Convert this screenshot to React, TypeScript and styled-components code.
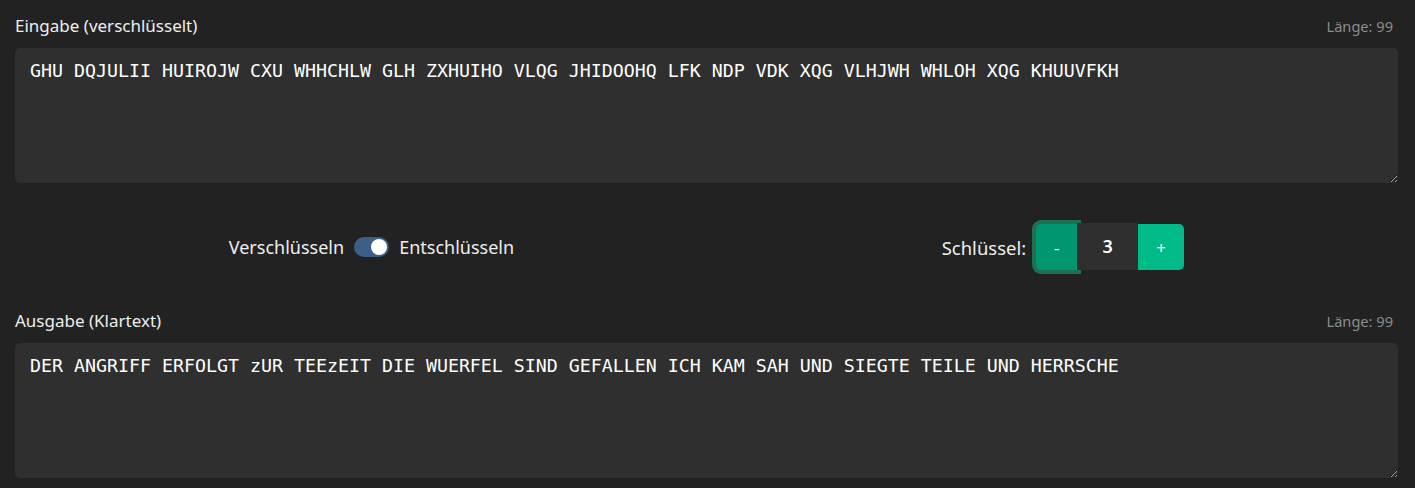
import React, { useState } from 'react';
import styled, { createGlobalStyle } from 'styled-components';

const GlobalStyle = createGlobalStyle`
  html, body {
    margin: 0;
    padding: 0;
    background: #222222;
  }
  body {
    font-family: "Noto Sans", "Open Sans", sans-serif;
    color: #eeeeee;
  }
`;

const Page = styled.div`
  display: flex;
  flex-direction: column;
  padding: 14px 17px 10px 15px;
  height: 488px;
  box-sizing: border-box;
`;

const Section = styled.section`
  display: flex;
  flex-direction: column;
  gap: 11px;
`;

const SectionHeader = styled.div`
  display: flex;
  justify-content: space-between;
  align-items: baseline;
  height: 23px;
`;

const Label = styled.label`
  font-size: 17px;
  line-height: 23px;
  color: #eeeeee;
`;

const Length = styled.span`
  font-size: 14.6px;
  color: #8c8c8c;
  padding-right: 5px;
`;

const TextArea = styled.textarea`
  display: block;
  box-sizing: border-box;
  width: 100%;
  height: 135px;
  margin: 0;
  padding: 12px 15px;
  border: none;
  border-radius: 5px;
  background: #2f2f2f;
  color: #ffffff;
  color-scheme: dark;
  font-family: "DejaVu Sans Mono", "Liberation Mono", monospace;
  font-size: 18.27px;
  line-height: 1.164;
  outline: none;
`;

const Controls = styled.div`
  display: flex;
  justify-content: space-around;
  align-items: center;
  height: 46px;
  margin: 41px 0 39px;
`;

const ToggleGroup = styled.div`
  display: flex;
  align-items: center;
  gap: 10px;
  font-size: 18px;
`;

const Switch = styled.button<{ $on: boolean }>`
  position: relative;
  width: 35px;
  height: 20px;
  padding: 0;
  border: none;
  border-radius: 10px;
  background: #3b5f86;
  cursor: pointer;
  &::after {
    content: "";
    position: absolute;
    top: 2px;
    left: ${p => (p.$on ? '17px' : '2px')};
    width: 16px;
    height: 16px;
    border-radius: 50%;
    background: #ffffff;
  }
`;

const KeyGroup = styled.div`
  display: flex;
  align-items: center;
  gap: 6px;
  font-size: 18.5px;
`;

const Stepper = styled.div`
  display: flex;
  align-items: stretch;
  height: 46px;
  padding-left: 4px;
`;

const StepButton = styled.button<{ $side: 'left' | 'right'; $focused?: boolean }>`
  width: ${p => (p.$side === 'left' ? '41px' : '46px')};
  border: none;
  margin: 0;
  padding: 0;
  color: #ffffff;
  font-family: inherit;
  font-size: 17px;
  cursor: pointer;
  background: ${p => (p.$side === 'left' ? '#009670' : '#00bb88')};
  border-radius: ${p => (p.$side === 'left' ? '5px 0 0 5px' : '0 5px 5px 0')};
  box-shadow: ${p => (p.$focused ? '0 0 0 4px #1f6e55' : 'none')};
  position: relative;
`;

const Value = styled.div`
  display: flex;
  align-items: center;
  justify-content: center;
  width: 61px;
  background: #2f2f2f;
  font-size: 18px;
  font-weight: 600;
  color: #ffffff;
  position: relative;
  z-index: 1;
  margin-top: -1px;
  padding-bottom: 1px;
`;

const cipher = 'GHU DQJULII HUIROJW CXU WHHCHLW GLH ZXHUIHO VLQG JHIDOOHQ LFK NDP VDK XQG VLHJWH WHLOH XQG KHUUVFKH';
const plain = 'DER ANGRIFF ERFOLGT zUR TEEzEIT DIE WUERFEL SIND GEFALLEN ICH KAM SAH UND SIEGTE TEILE UND HERRSCHE';

export default function App() {
  const [input, setInput] = useState(cipher);
  const [decrypt, setDecrypt] = useState(true);
  const [key, setKey] = useState(3);

  return (
    <>
      <GlobalStyle />
      <Page>
        <Section>
          <SectionHeader>
            <Label>Eingabe (verschlüsselt)</Label>
            <Length>Länge: {input.length}</Length>
          </SectionHeader>
          <TextArea value={input} onChange={e => setInput(e.target.value)} spellCheck={false} />
        </Section>

        <Controls>
          <ToggleGroup>
            <span>Verschlüsseln</span>
            <Switch $on={decrypt} onClick={() => setDecrypt(!decrypt)} aria-label="Modus" />
            <span>Entschlüsseln</span>
          </ToggleGroup>
          <KeyGroup>
            <span>Schlüssel:</span>
            <Stepper>
              <StepButton $side="left" $focused onClick={() => setKey(k => k - 1)}>-</StepButton>
              <Value>{key}</Value>
              <StepButton $side="right" onClick={() => setKey(k => k + 1)}>+</StepButton>
            </Stepper>
          </KeyGroup>
        </Controls>

        <Section>
          <SectionHeader>
            <Label>Ausgabe (Klartext)</Label>
            <Length>Länge: {plain.length}</Length>
          </SectionHeader>
          <TextArea value={plain} readOnly spellCheck={false} />
        </Section>
      </Page>
    </>
  );
}
